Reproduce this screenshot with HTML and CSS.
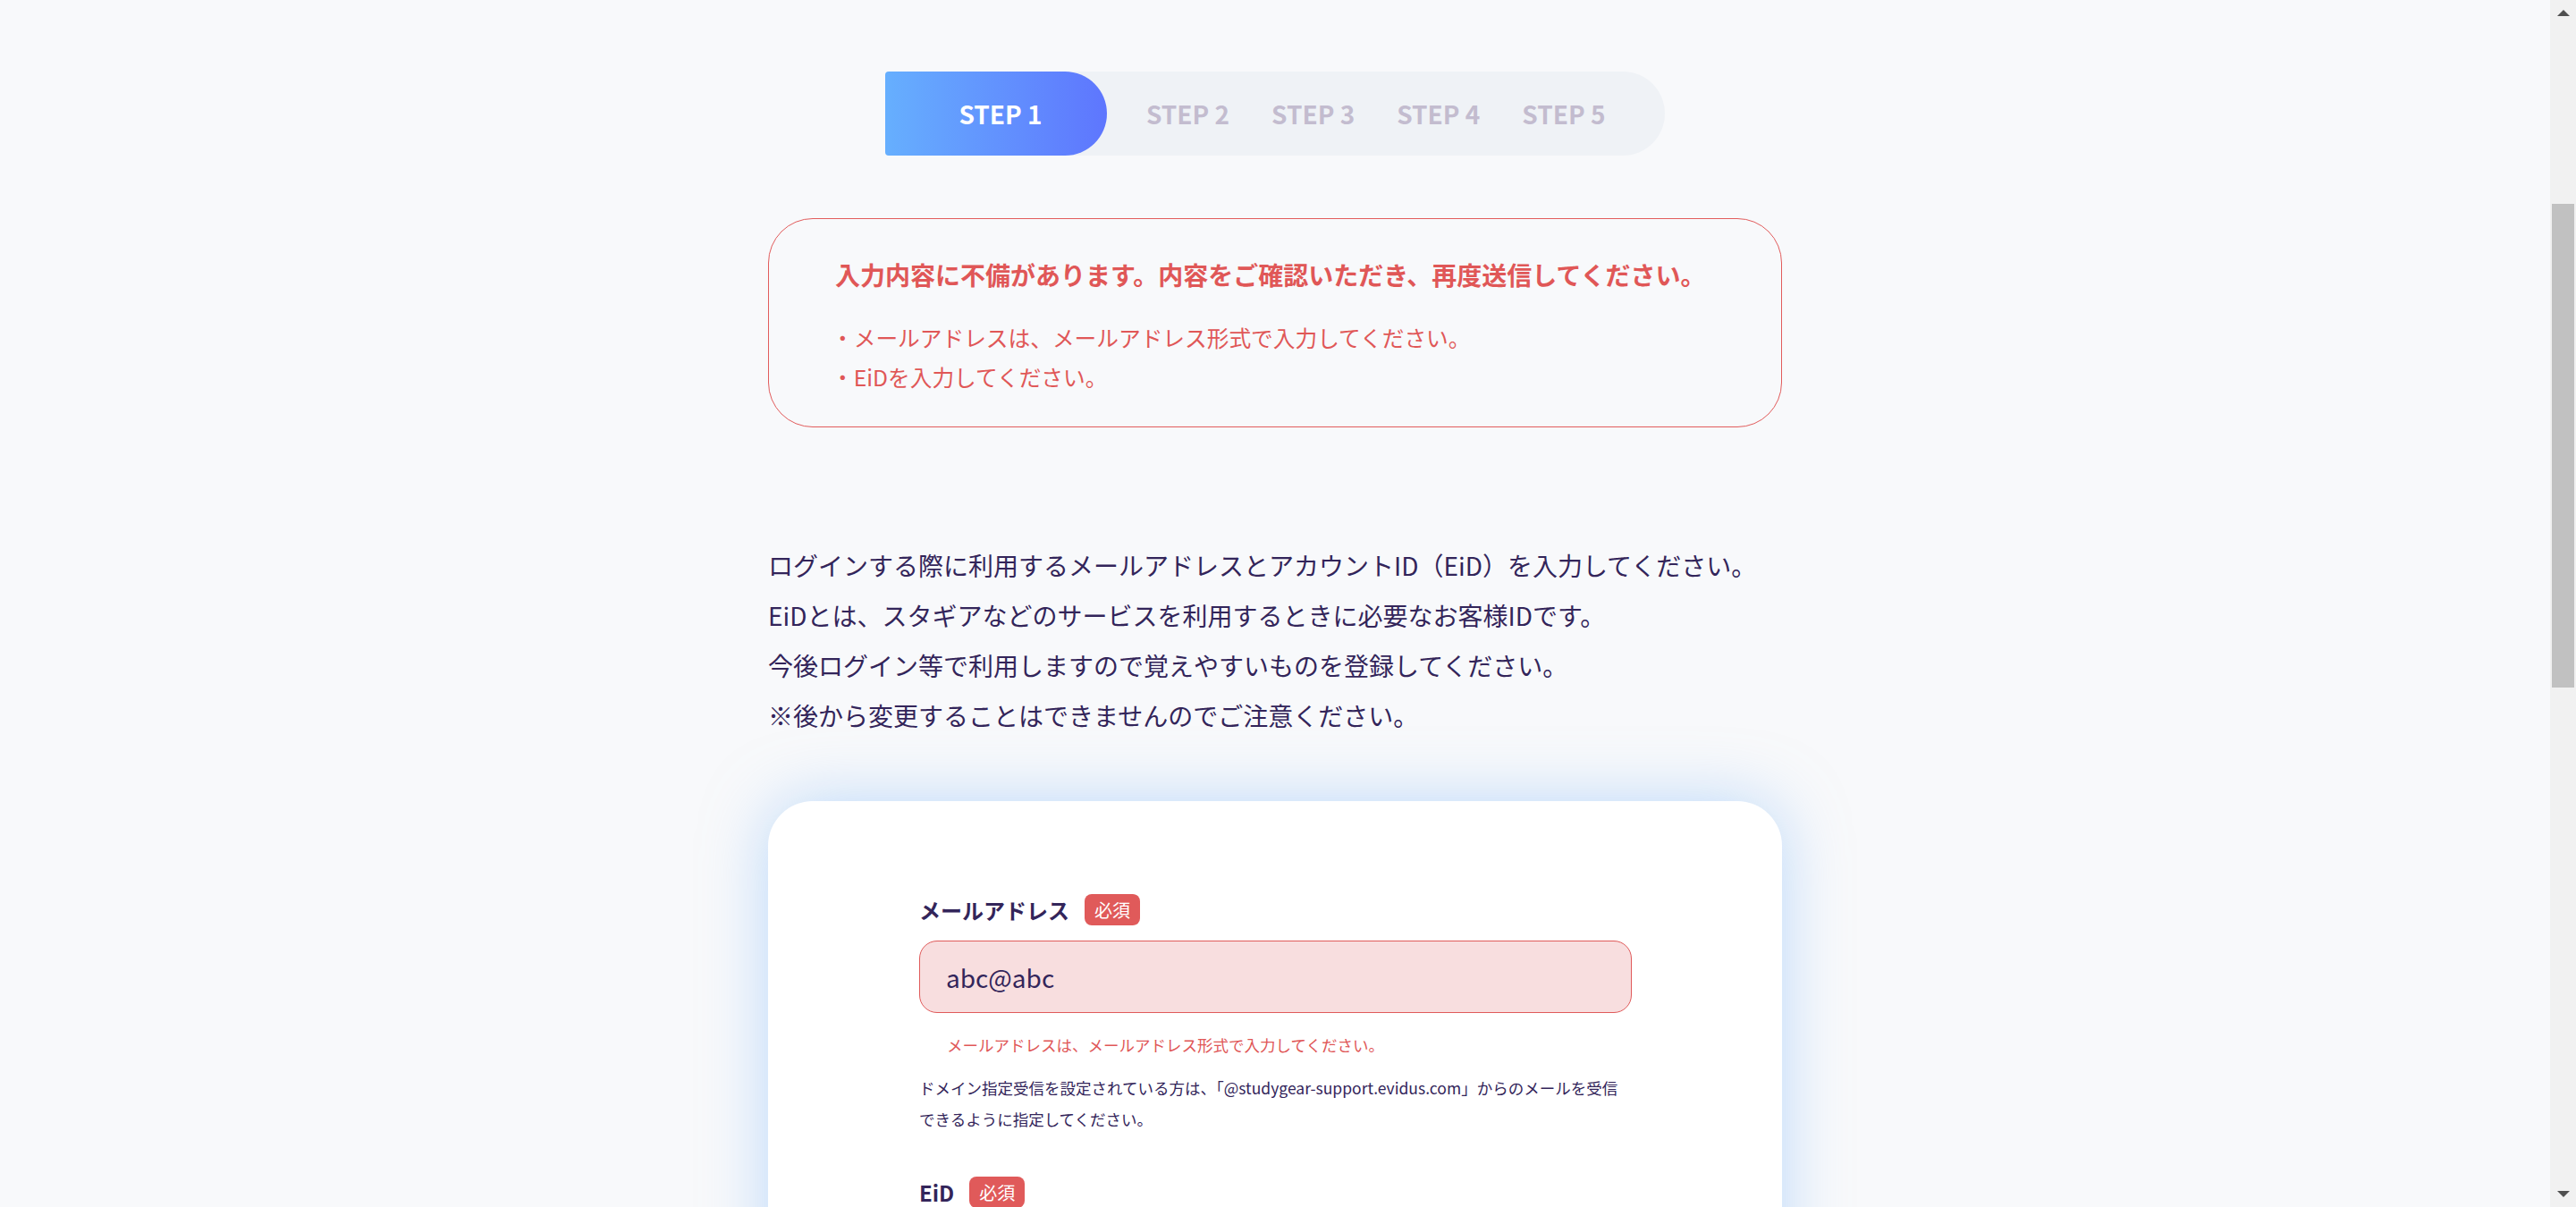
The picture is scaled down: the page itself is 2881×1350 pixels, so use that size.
FILE: index.html
```html
<!DOCTYPE html>
<html lang="ja">
<head>
<meta charset="utf-8">
<title>STEP 1</title>
<link rel="stylesheet" href="styles.css">
</head>
<body>
<div class="frame">
  <main class="main">
    <nav class="steps">
      <div class="step step-active">STEP 1</div>
      <div class="step-rest">
        <div class="step">STEP 2</div>
        <div class="step">STEP 3</div>
        <div class="step">STEP 4</div>
        <div class="step">STEP 5</div>
      </div>
    </nav>

    <section class="alert">
      <p class="alert-title">入力内容に不備があります。内容をご確認いただき、再度送信してください。</p>
      <ul class="alert-list">
        <li>・メールアドレスは、メールアドレス形式で入力してください。</li>
        <li>・EiDを入力してください。</li>
      </ul>
    </section>

    <div class="intro">
      <p>ログインする際に利用するメールアドレスとアカウントID（EiD）を入力してください。</p>
      <p>EiDとは、スタギアなどのサービスを利用するときに必要なお客様IDです。</p>
      <p>今後ログイン等で利用しますので覚えやすいものを登録してください。</p>
      <p>※後から変更することはできませんのでご注意ください。</p>
    </div>

    <section class="card">
      <div class="field">
        <div class="label-row">
          <span class="label">メールアドレス</span>
          <span class="badge">必須</span>
        </div>
        <div class="input input-error">abc@abc</div>
        <p class="field-error">メールアドレスは、メールアドレス形式で入力してください。</p>
        <p class="field-note">ドメイン指定受信を設定されている方は、「@studygear-support.evidus.com」からのメールを受信できるように指定してください。</p>
      </div>
      <div class="field field-next">
        <div class="label-row">
          <span class="label">EiD</span>
          <span class="badge">必須</span>
        </div>
        <div class="input"></div>
      </div>
    </section>
  </main>

  <aside class="scrollbar">
    <span class="arrow arrow-up"></span>
    <div class="track">
      <div class="thumb"></div>
    </div>
    <span class="arrow arrow-down"></span>
  </aside>
</div>
</body>
</html>
```

FILE: styles.css
```css
* { box-sizing: border-box; }
html, body {
  margin: 0;
  padding: 0;
  height: 100%;
  overflow: hidden;
}
body {
  background: #f8f9fb;
  font-family: "Noto Sans CJK JP", "Noto Sans", sans-serif;
  color: #33255a;
}
p, ul { margin: 0; padding: 0; }
ul { list-style: none; }

.frame {
  display: flex;
  height: 100vh;
}
.main {
  flex: 1;
  overflow: hidden;
  padding-top: 80px;
  display: flex;
  flex-direction: column;
  align-items: center;
}

/* steps */
.steps {
  width: 872px;
  height: 94px;
  display: flex;
  align-items: center;
  background: #eff2f6;
  border-radius: 4px 47px 47px 4px;
  flex-shrink: 0;
}
.step {
  font-size: 28px;
  font-weight: 700;
  color: #c3bccf;
  line-height: 1;
  white-space: nowrap;
}
.step-active {
  width: 248px;
  height: 94px;
  display: flex;
  align-items: center;
  justify-content: center;
  padding-left: 10px;
  color: #fff;
  border-radius: 4px 47px 47px 4px;
  background: linear-gradient(90deg, #66affe 0%, #5e76fe 100%);
}
.step-rest {
  display: flex;
  gap: 47px;
  margin-left: 44px;
}

/* alert */
.alert {
  width: 1134px;
  margin-top: 70px;
  border: 1.5px solid #e25c5c;
  border-radius: 50px;
  padding: 42px 70px 34px 70px;
  color: #e05757;
  flex-shrink: 0;
}
.alert-title {
  font-size: 28px;
  font-weight: 700;
  line-height: 40px;
  padding-left: 4px;
}
.alert-list {
  margin-top: 28px;
  font-size: 24.7px;
  line-height: 44px;
}

/* intro */
.intro {
  width: 1134px;
  margin-top: 126px;
  font-size: 28px;
  line-height: 56px;
  flex-shrink: 0;
}

/* card */
.card {
  width: 1134px;
  margin-top: 68px;
  background: #fff;
  border-radius: 50px;
  padding: 104px 168px 80px 169px;
  box-shadow: 0 0 70px rgba(130, 185, 250, 0.5);
  flex-shrink: 0;
}
.label-row {
  display: flex;
  align-items: center;
  gap: 17px;
  height: 35px;
}
.label {
  font-size: 24px;
  font-weight: 700;
  line-height: 35px;
}
.badge {
  display: inline-flex;
  align-items: center;
  justify-content: center;
  width: 62px;
  height: 35px;
  border-radius: 8px;
  background: #e05a5a;
  color: #fff;
  font-size: 20px;
  line-height: 1;
}
.input {
  margin-top: 17px;
  height: 81px;
  border: 1.5px solid #d8d5e0;
  border-radius: 20px;
  padding-left: 29px;
  display: flex;
  align-items: center;
  font-size: 28px;
  color: #33255a;
}
.input-error {
  background: #f8dedf;
  border-color: #e05a5a;
}
.field-error {
  margin-top: 18px;
  padding-left: 31px;
  font-size: 17.5px;
  line-height: 35px;
  color: #e05757;
}
.field-note {
  margin-top: 13px;
  font-size: 17.5px;
  line-height: 35px;
}
.field-next {
  margin-top: 47px;
}

/* scrollbar */
.scrollbar {
  width: 29px;
  height: 100vh;
  background: #f1f1f1;
  display: flex;
  flex-direction: column;
  align-items: center;
  flex-shrink: 0;
}
.arrow {
  width: 0;
  height: 0;
  border-left: 7px solid transparent;
  border-right: 7px solid transparent;
  margin: 11px 0;
}
.arrow-up { border-bottom: 7px solid #505050; }
.arrow-down { border-top: 7px solid #505050; }
.track {
  flex: 1;
  width: 100%;
  padding: 199px 2px 0 2px;
}
.thumb {
  height: 541px;
  background: #c1c1c1;
}
```
